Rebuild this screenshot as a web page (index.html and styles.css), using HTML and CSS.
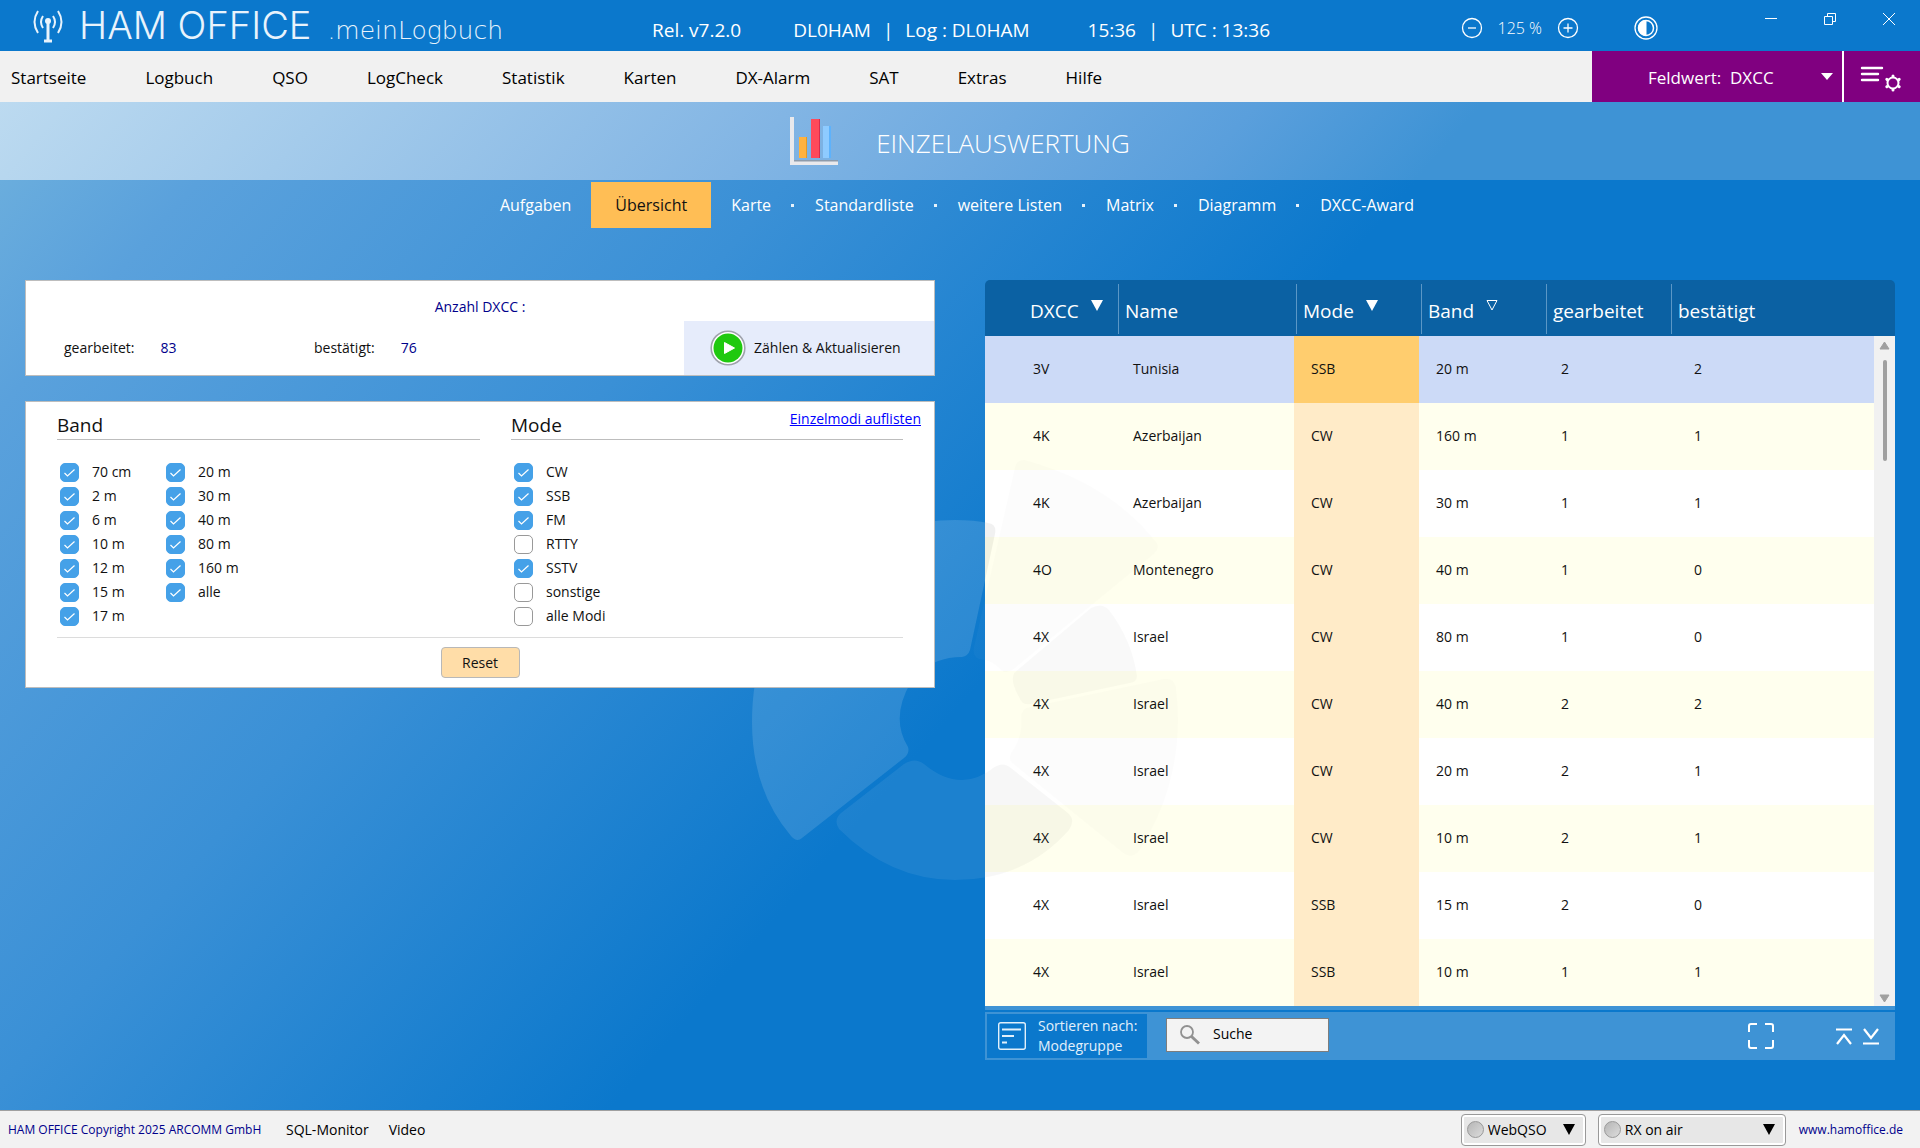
FILE: index.html
```html
<!DOCTYPE html>
<html lang="de">
<head>
<meta charset="utf-8">
<title>HAM OFFICE .meinLogbuch</title>
<link rel="stylesheet" href="styles.css">
</head>
<body>
<svg class="defs" aria-hidden="true">
  <symbol id="wheel" viewBox="750 455 430 430">
    <path opacity=".9" d="M854 553 Q895 520 955 520 Q975 520 988 523 Q997 524 995 534 L970 650 Q968 656 962 657 Q935 657 918 674 Z"/>
    <path opacity=".9" d="M752 722 Q752 640 800 592 L911 682 Q890 718 908 747 Q910 753 904 758 L802 838 Q797 843 791 836 Q752 790 752 722Z"/>
    <path opacity=".5" d="M841 813 L904 764 Q915 757 924 764 Q960 794 993 768 Q1003 761 1011 768 L1068 813 Q1076 820 1069 830 Q1025 880 955 880 Q890 880 839 829 Q833 820 841 813Z"/>
    <path opacity=".2" d="M1015 467 Q1017 459 1025 460 Q1110 483 1157 543 Q1160 548 1154 554 L1014 669 Q1005 676 999 668 Q990 660 979 659 Q972 656 974 647 Z"/>
    <path opacity=".4" d="M1091 608 Q1102 602 1109 610 Q1132 640 1137 676 Q1137 682 1130 683 L1031 704 Q1022 706 1019 697 Q1010 682 1014 673 Z"/>
    <path opacity=".2" d="M1163 679 Q1174 677 1176 687 Q1187 775 1140 850 Q1132 860 1123 853 L1012 763 Q1008 760 1011 753 Q1023 736 1021 718 Q1021 708 1030 707 Z"/>
  </symbol>
</svg>

<header class="topbar">
  <div class="brand">
    <svg class="brand-icon" viewBox="0 0 30 34" fill="none" stroke="#e8f3fc" stroke-width="2">
      <path d="M5 2Q-2 13 5 24M10 7Q6 13 10 19M25 2Q32 13 25 24M20 7Q24 13 20 19"/>
      <circle cx="15" cy="12" r="3" fill="#e8f3fc" stroke="none"/>
      <path d="M15 12V31" stroke-width="3"/><path d="M11 32H19" stroke-width="3"/>
    </svg>
    <span class="brand-name">HAM OFFICE</span>
    <span class="brand-sub">.meinLogbuch</span>
  </div>
  <div class="status">
    <span class="release">Rel. v7.2.0</span>
    <span>DL0HAM</span><span class="bar">|</span><span class="log">Log : DL0HAM</span>
    <span>15:36</span><span class="bar">|</span><span>UTC : 13:36</span>
  </div>
  <div class="tools">
    <button class="icon-btn" aria-label="Verkleinern"><svg width="22" height="22" viewBox="0 0 22 22" fill="none" stroke="#fff" stroke-width="1.3"><circle cx="11" cy="11" r="9.5"/><path d="M7 11H15"/></svg></button>
    <span class="zoom">125 %</span>
    <button class="icon-btn" aria-label="Vergrößern"><svg width="22" height="22" viewBox="0 0 22 22" fill="none" stroke="#fff" stroke-width="1.3"><circle cx="11" cy="11" r="9.5"/><path d="M6.500 11H15.500M11 6.500V15.500"/></svg></button>
    <button class="icon-btn contrast" aria-label="Kontrast"><svg width="24" height="24" viewBox="0 0 24 24" fill="none" stroke="#fff"><circle cx="12" cy="12" r="11" stroke-width="1.300"/><circle cx="12" cy="12" r="7.500" stroke-width="1.500"/><path d="M12 4.500a7.500 7.500 0 0 0 0 15z" fill="#fff"/></svg></button>
  </div>
  <div class="window-controls">
    <button class="icon-btn" aria-label="Minimieren"><svg width="14" height="14" viewBox="0 0 14 14" stroke="#fff"><path d="M1 6.500H13"/></svg></button>
    <button class="icon-btn" aria-label="Wiederherstellen"><svg width="14" height="14" viewBox="0 0 14 14" fill="none" stroke="#fff"><path d="M1.500 4.500H9.500V12.500H1.500ZM4.500 4.500V1.500H12.500V9.500H9.500"/></svg></button>
    <button class="icon-btn" aria-label="Schließen"><svg width="14" height="14" viewBox="0 0 14 14" stroke="#fff"><path d="M1 1L13 13M13 1L1 13"/></svg></button>
  </div>
</header>

<div class="menubar">
  <nav class="menu">
    <a href="#">Startseite</a><a href="#">Logbuch</a><a href="#">QSO</a><a href="#">LogCheck</a><a href="#">Statistik</a><a href="#">Karten</a><a href="#">DX-Alarm</a><a href="#">SAT</a><a href="#">Extras</a><a href="#">Hilfe</a>
  </nav>
  <div class="field-select">
    <select aria-label="Feldwert"><option>Feldwert:&nbsp; DXCC</option></select>
    <svg width="12" height="7" viewBox="0 0 12 7" fill="#fff"><path d="M0 0H12L6 7Z"/></svg>
  </div>
  <button class="list-settings" aria-label="Listeneinstellungen">
    <svg width="42" height="28" viewBox="0 0 42 28" fill="none" stroke="#fff" stroke-width="2.400" stroke-linecap="round"><path d="M2 3H22M2 9H18M2 15H18"/><circle cx="33" cy="18" r="5.500" stroke-width="2"/><path d="M33 11.500V11M33 25V24.500M27 14.500L26.800 14.300M39.200 21.700L39 21.500M39 14.500L39.200 14.300M26.800 21.700L27 21.500" stroke-width="3"/></svg>
  </button>
</div>

<div class="banner">
  <svg width="48" height="48" viewBox="0 0 48 48">
    <path fill="#e9e9ec" d="M0 0H4V44H48V48H0Z"/><path fill="#8d9bab" d="M4 43H48V44.500H4Z"/>
    <path fill="#ffb23e" d="M9 20H17V41H9Z"/><path fill="#e59a23" d="M16 20H17V41H16Z"/>
    <path fill="#ff4a5a" d="M21 2H30V41H21Z"/><path fill="#d92c4c" d="M29 2H30V41H29Z"/>
    <path fill="#8ecbff" d="M33 9H40V41H33Z"/><path fill="#5eb2fb" d="M39 9H41V41H39Z"/>
  </svg>
  <h1>EINZELAUSWERTUNG</h1>
</div>

<div class="stage">
  <svg class="wheel wheel-back" aria-hidden="true"><use href="#wheel"/></svg>
  <nav class="tabs">
    <a href="#">Aufgaben</a><a href="#" class="active">Übersicht</a><a href="#">Karte</a><a href="#" class="dot">Standardliste</a><a href="#" class="dot">weitere Listen</a><a href="#" class="dot">Matrix</a><a href="#" class="dot">Diagramm</a><a href="#" class="dot">DXCC-Award</a>
  </nav>

  <main class="content">
    <div class="left">
      <section class="card summary">
        <p class="summary-title">Anzahl DXCC :</p>
        <dl>
          <div><dt>gearbeitet:</dt><dd>83</dd></div>
          <div><dt>bestätigt:</dt><dd>76</dd></div>
        </dl>
        <button class="count-btn">
          <svg width="36" height="36" viewBox="0 0 36 36"><circle cx="18" cy="18" r="16.800" fill="#fff" stroke="#9fa3ac" stroke-width="1.600"/><circle cx="18" cy="18" r="14.500" fill="#1fc90f"/><path d="M14.500 12.500L24.500 18L14.500 23.500Z" fill="#fff" stroke="#fff" stroke-linejoin="round"/></svg>
          Zählen &amp; Aktualisieren
        </button>
      </section>

      <section class="card filter">
        <div class="filter-cols">
          <div>
            <h2>Band</h2>
            <div class="checks">
              <label><input type="checkbox" checked>70 cm</label>
              <label><input type="checkbox" checked>2 m</label>
              <label><input type="checkbox" checked>6 m</label>
              <label><input type="checkbox" checked>10 m</label>
              <label><input type="checkbox" checked>12 m</label>
              <label><input type="checkbox" checked>15 m</label>
              <label><input type="checkbox" checked>17 m</label>
              <label><input type="checkbox" checked>20 m</label>
              <label><input type="checkbox" checked>30 m</label>
              <label><input type="checkbox" checked>40 m</label>
              <label><input type="checkbox" checked>80 m</label>
              <label><input type="checkbox" checked>160 m</label>
              <label><input type="checkbox" checked>alle</label>
            </div>
          </div>
          <div>
            <h2>Mode</h2>
            <div class="checks">
              <label><input type="checkbox" checked>CW</label>
              <label><input type="checkbox" checked>SSB</label>
              <label><input type="checkbox" checked>FM</label>
              <label><input type="checkbox">RTTY</label>
              <label><input type="checkbox" checked>SSTV</label>
              <label><input type="checkbox">sonstige</label>
              <label><input type="checkbox">alle Modi</label>
            </div>
          </div>
        </div>
        <a href="#" class="modes-link">Einzelmodi auflisten</a>
        <div class="reset-row"><button class="reset">Reset</button></div>
      </section>
    </div>

    <div class="right">
      <div class="table-wrap">
        <table>
          <colgroup><col class="c-dxcc"><col class="c-name"><col class="c-std"><col class="c-std"><col class="c-std"><col></colgroup>
          <thead>
            <tr>
              <th>DXCC<svg class="sort" viewBox="0 0 12 11"><path d="M0 0H12L6 11Z" fill="#fff"/></svg></th>
              <th>Name</th>
              <th>Mode<svg class="sort" viewBox="0 0 12 11"><path d="M0 0H12L6 11Z" fill="#fff"/></svg></th>
              <th>Band<svg class="sort" viewBox="0 0 12 11"><path d="M1 .5H11L6 10Z" fill="none" stroke="#fff"/></svg></th>
              <th>gearbeitet</th>
              <th>bestätigt</th>
            </tr>
          </thead>
          <tbody>
            <tr class="selected"><td>3V</td><td>Tunisia</td><td>SSB</td><td>20 m</td><td>2</td><td>2</td></tr>
            <tr><td>4K</td><td>Azerbaijan</td><td>CW</td><td>160 m</td><td>1</td><td>1</td></tr>
            <tr><td>4K</td><td>Azerbaijan</td><td>CW</td><td>30 m</td><td>1</td><td>1</td></tr>
            <tr><td>4O</td><td>Montenegro</td><td>CW</td><td>40 m</td><td>1</td><td>0</td></tr>
            <tr><td>4X</td><td>Israel</td><td>CW</td><td>80 m</td><td>1</td><td>0</td></tr>
            <tr><td>4X</td><td>Israel</td><td>CW</td><td>40 m</td><td>2</td><td>2</td></tr>
            <tr><td>4X</td><td>Israel</td><td>CW</td><td>20 m</td><td>2</td><td>1</td></tr>
            <tr><td>4X</td><td>Israel</td><td>CW</td><td>10 m</td><td>2</td><td>1</td></tr>
            <tr><td>4X</td><td>Israel</td><td>SSB</td><td>15 m</td><td>2</td><td>0</td></tr>
            <tr><td>4X</td><td>Israel</td><td>SSB</td><td>10 m</td><td>1</td><td>1</td></tr>
          </tbody>
        </table>
        <svg class="wheel wheel-front" aria-hidden="true"><use href="#wheel"/></svg>
        <div class="scrollbar">
          <svg width="11" height="9" viewBox="0 0 11 9"><path d="M5.500 1L10 8H1Z" fill="#a0a0a0" stroke="#a0a0a0" stroke-linejoin="round"/></svg>
          <span class="thumb"></span>
          <svg width="11" height="9" viewBox="0 0 11 9"><path d="M5.500 8L10 1H1Z" fill="#a0a0a0" stroke="#a0a0a0" stroke-linejoin="round"/></svg>
        </div>
      </div>
      <div class="table-tools">
        <button class="sort-btn">
          <svg width="28" height="28" viewBox="0 0 28 28" fill="none" stroke="#e2f0fb" stroke-width="1.400"><rect x=".7" y=".7" width="26.600" height="26.600" rx="2"/><path d="M4 7.500H23M4 14H16M4 20.500H9" stroke-width="1.800"/></svg>
          <span>Sortieren nach:<br>Modegruppe</span>
        </button>
        <label class="search">
          <svg width="20" height="20" viewBox="0 0 20 20" fill="none" stroke="#919191"><circle cx="7" cy="7" r="6" stroke-width="1.800"/><path d="M11.500 11.500L19 18.500" stroke-width="3"/></svg>
          <input type="text" value="Suche" aria-label="Suche">
        </label>
        <button class="icon-btn full" aria-label="Vollbild"><svg width="26" height="26" viewBox="0 0 26 26" fill="none" stroke="#fff" stroke-width="2"><path d="M1 9V3Q1 1 3 1H9M17 1H23Q25 1 25 3V9M25 17V23Q25 25 23 25H17M9 25H3Q1 25 1 23V17"/></svg></button>
        <button class="icon-btn" aria-label="Zum Anfang"><svg width="16" height="17" viewBox="0 0 16 17" fill="none" stroke="#fff" stroke-width="2.200"><path d="M0 1.500H16M1 16L8 7L15 16"/></svg></button>
        <button class="icon-btn" aria-label="Zum Ende"><svg width="16" height="17" viewBox="0 0 16 17" fill="none" stroke="#fff" stroke-width="2.200"><path d="M0 15.500H16M1 1L8 10L15 1"/></svg></button>
      </div>
    </div>
  </main>
</div>

<footer class="footer">
  <span class="copyright">HAM OFFICE Copyright 2025 ARCOMM GmbH</span>
  <a href="#" class="foot-link">SQL-Monitor</a>
  <a href="#" class="foot-link">Video</a>
  <div class="foot-select web">
    <span class="led"></span>
    <select aria-label="WebQSO"><option>WebQSO</option></select>
    <svg width="12" height="11" viewBox="0 0 12 11"><path d="M0 0H12L6 11Z"/></svg>
  </div>
  <div class="foot-select rx">
    <span class="led"></span>
    <select aria-label="RX on air"><option>RX on air</option></select>
    <svg width="12" height="11" viewBox="0 0 12 11"><path d="M0 0H12L6 11Z"/></svg>
  </div>
  <a href="#" class="site">www.hamoffice.de</a>
</footer>
</body>
</html>
```
FILE: styles.css
```css
:root {
  --blue: #0b78cc;
  --blue-dark: #0b61a3;
  --blue-light: #3e93d5;
  --navy: #00008b;
  --purple: #800080;
  --line: #bdbdbd;
}

* { box-sizing: border-box; }

body {
  margin: 0;
  min-height: 100vh;
  display: flex;
  flex-direction: column;
  font: 14px/20px "Open Sans", "Noto Sans", sans-serif;
  color: #111;
}

h1, h2, p, dl, dd { margin: 0; font-weight: 400; }
a { color: inherit; text-decoration: none; }
button, input, select { font: inherit; color: inherit; }
button, select { border: 0; padding: 0; background: none; appearance: none; cursor: pointer; }
svg { display: block; flex: none; }
.defs { position: absolute; width: 0; height: 0; }

/* Title bar */
.topbar {
  display: flex;
  align-items: center;
  height: 51px;
  padding-right: 24px;
  background: var(--blue);
  color: #fff;
}
.brand {
  display: flex;
  align-items: baseline;
  width: 652px;
  padding: 4px 0 0 33px;
  color: #e8f3fc;
  white-space: nowrap;
}
.brand-icon { width: 30px; height: 34px; align-self: center; margin: 0 16px 4px 0; }
.brand-name { font: 300 38px/44px Inter, sans-serif; }
.brand-sub { margin-left: 16px; font: 200 25px/44px "DejaVu Sans", sans-serif; }
.status {
  display: flex;
  gap: 12px;
  padding-top: 8px;
  font-size: 19px;
  line-height: 24px;
  white-space: nowrap;
}
.release { margin-right: 40px; }
.log { margin-right: 46px; }
.tools { display: flex; align-items: center; gap: 15px; margin-left: auto; padding-top: 5px; }
.zoom { font-size: 16px; font-weight: 300; }
.icon-btn { display: block; }
.contrast { margin-left: 40px; }
.window-controls { display: flex; gap: 45px; margin-left: 106px; padding-bottom: 13px; }

/* Menu */
.menubar { display: flex; height: 51px; background: #f1f1f1; }
.menu {
  display: flex;
  align-items: center;
  gap: 59px;
  flex: 1;
  padding: 2px 0 0 11px;
  font-size: 17px;
  color: #000;
}
.field-select {
  display: flex;
  align-items: center;
  width: 250px;
  padding-right: 9px;
  background: var(--purple);
  color: #fff;
  font-size: 17px;
}
.field-select select { flex: 1; height: 51px; padding: 2px 0 0 56px; }
.field-select option { color: #000; background: #fff; }
.list-settings {
  display: flex;
  align-items: center;
  width: 78px;
  padding: 4px 0 0 16px;
  border-left: 2px solid #fff;
  background: var(--purple);
}

/* Heading */
.banner {
  display: flex;
  align-items: center;
  justify-content: center;
  gap: 38px;
  height: 78px;
  background: linear-gradient(131deg, #bcdaf0 0, #a4cbeb 250px, #82b5e4 600px, #5a9fdc 950px, #3e93d5 1120px);
}
.banner h1 { color: #fff; font-size: 26px; line-height: 36px; font-weight: 300; padding-top: 4px; }

/* Working area */
.stage {
  position: relative;
  flex: 1;
  background: linear-gradient(131deg, #6aaddd 0, #5aa1dc 150px, #3a90d6 595px, var(--blue) 1070px);
}
.wheel { position: absolute; width: 430px; height: 430px; pointer-events: none; }
.wheel-back { top: 275px; left: calc(50% - 210px); fill: rgba(255, 255, 255, .14); }
.wheel-front { top: 175px; left: -235px; fill: rgba(0, 0, 0, .06); }

.tabs {
  position: relative;
  display: flex;
  justify-content: center;
  align-items: center;
  height: 46px;
  margin-top: 2px;
  color: #fff;
  font-size: 16px;
  line-height: 46px;
}
.tabs a { padding: 0 20px; }
.tabs .active { padding: 0 24px; background: #ffbe55; color: #111; }
.tabs .dot { display: flex; align-items: center; padding-left: 0; }
.tabs .dot::before { content: ""; width: 3px; height: 3px; margin-right: 21px; background: #e6f2fb; }
.tabs { padding-right: 6px; }

.content {
  position: relative;
  display: grid;
  grid-template-columns: minmax(0, 1fr) minmax(0, 1fr);
  gap: 50px;
  align-items: start;
  padding: 52px 25px 50px;
}
.left { display: grid; gap: 25px; }
.card { position: relative; background: #fff; border: 1px solid var(--line); }

.summary {
  display: grid;
  grid-template-columns: 1fr 250px;
  grid-template-rows: 40px 54px;
}
.summary-title { grid-column: 1 / 3; padding-top: 16px; text-align: center; color: var(--navy); }
.summary dl { display: flex; padding-left: 38px; line-height: 54px; }
.summary dl div { display: flex; width: 250px; gap: 26px; }
.summary dd { color: var(--navy); }
.count-btn { display: flex; align-items: center; gap: 8px; padding-left: 26px; background: #e6ecfb; }

.filter { padding: 12px 31px 9px; }
.filter-cols {
  display: grid;
  grid-template-columns: 423px 1fr;
  gap: 31px;
  padding-bottom: 9px;
  border-bottom: 1px solid #dcdcdc;
}
.filter h2 { padding-bottom: 2px; font-size: 19px; line-height: 23px; border-bottom: 1px solid var(--line); }
.checks {
  display: grid;
  grid-auto-flow: column;
  grid-template-rows: repeat(7, 24px);
  grid-auto-columns: 106px;
  padding: 20px 0 0 3px;
}
.checks label { display: flex; align-items: center; gap: 13px; white-space: nowrap; }
.checks input {
  appearance: none;
  width: 19px;
  height: 19px;
  margin: 0;
  border: 1px solid #999;
  border-radius: 5px;
  background: #fff;
}
.checks input:checked {
  border-color: #45a1e8;
  background: #45a1e8 url("data:image/svg+xml,%3Csvg xmlns='http://www.w3.org/2000/svg' viewBox='0 0 17 17'%3E%3Cpath d='M3.500 9L6.500 12L13.500 5.500' fill='none' stroke='%23fff' stroke-width='1.200'/%3E%3C/svg%3E") center / 17px 17px no-repeat;
}
.modes-link { position: absolute; top: 7px; right: 13px; color: #00f; text-decoration: underline; }
.reset-row { display: flex; justify-content: center; padding-top: 9px; }
.reset { width: 79px; height: 31px; border: 1px solid #b8b8b8; border-radius: 4px; background: #ffdda8; }

/* Result table */
.table-wrap {
  position: relative;
  overflow: hidden;
  border-bottom: 4px solid var(--blue-light);
  border-radius: 5px 5px 0 0;
}
table { width: 100%; table-layout: fixed; border-collapse: collapse; }
.c-dxcc { width: 131px; }
.c-name { width: 178px; }
.c-std { width: 125px; }
th {
  height: 56px;
  padding: 6px 0 0 9px;
  background: var(--blue-dark) linear-gradient(#5b97c6, #5b97c6) 2px 4px / 1px 50px no-repeat;
  color: #fff;
  font-size: 19px;
  line-height: 34px;
  font-weight: 400;
  text-align: left;
}
th:first-child { padding-left: 45px; background: var(--blue-dark); }
.sort { display: inline-block; width: 12px; height: 11px; margin-left: 12px; vertical-align: 7px; }
td { height: 67px; padding: 0 0 2px 17px; background: #fff; }
td:first-child { padding-left: 48px; }
td:last-child { padding-left: 25px; }
tbody tr:nth-child(even) td { background: #ffffee; }
tbody tr td:nth-child(3), tbody tr:nth-child(even) td:nth-child(3) { background: #ffebc8; }
tbody tr.selected td { background: #ccdaf7; }
tbody tr.selected td:nth-child(3) { background: #ffcd6e; }

.scrollbar {
  position: absolute;
  top: 56px;
  right: 0;
  bottom: -4px;
  width: 21px;
  display: flex;
  flex-direction: column;
  align-items: center;
  padding: 5px 0 7px;
  background: #f1f1f1;
}
.thumb { width: 4px; height: 101px; margin: 10px 0 auto; border-radius: 2px; background: #a0a0a0; }

.table-tools {
  display: flex;
  align-items: center;
  height: 48px;
  margin-top: 2px;
  padding: 0 16px 0 2px;
  background: var(--blue-light);
}
.sort-btn {
  display: flex;
  align-items: center;
  gap: 12px;
  width: 160px;
  height: 44px;
  padding-left: 11px;
  background: var(--blue);
  color: #e2f0fb;
  text-align: left;
  white-space: nowrap;
}
.search {
  display: flex;
  align-items: center;
  gap: 13px;
  width: 163px;
  height: 34px;
  margin: 0 auto 2px 19px;
  padding-left: 13px;
  border: 1px solid #7d7d7d;
  background: #f3f3f3;
}
.search input { width: 100px; padding: 0 0 2px; border: 0; background: none; color: #000; }
.full { margin-right: 62px; }
.full + .icon-btn { margin-right: 11px; }

/* Footer */
.footer {
  display: flex;
  align-items: center;
  height: 38px;
  padding: 0 17px 0 8px;
  border-top: 1px solid #a0a0a0;
  background: #f2f2f2;
  color: #000;
}
.copyright { width: 278px; color: var(--navy); font-size: 12px; }
.foot-link { margin-right: 20px; }
.foot-select {
  display: flex;
  align-items: center;
  height: 32px;
  padding-right: 10px;
  border: 1px solid #999;
  border-radius: 4px;
  box-shadow: inset 0 0 0 2px #fff;
  background: #e7e7e7;
}
.foot-select select { flex: 1; min-width: 0; }
.led { width: 17px; height: 17px; margin: 0 4px 0 5px; border: 1px solid #999; border-radius: 50%; background: linear-gradient(135deg, #b5b5b5, #dcdcdc); }
.web { width: 125px; margin-left: auto; }
.rx { width: 188px; margin: 0 13px 0 12px; }
.site { color: var(--navy); font-size: 12px; }
```
